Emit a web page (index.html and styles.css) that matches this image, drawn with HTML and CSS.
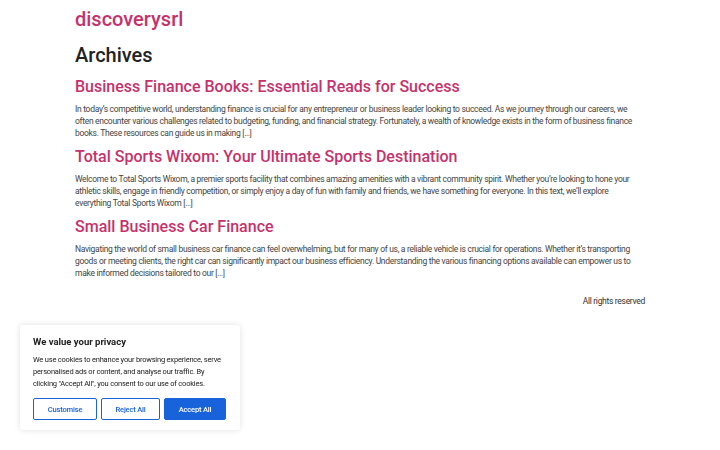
FILE: index.html
```html
<!DOCTYPE html>
<html lang="en">
<head>
<meta charset="utf-8">
<title>Archives - discoverysrl</title>
<link rel="stylesheet" href="styles.css">
</head>
<body>
<div class="page">
  <header class="site-header">
    <a class="site-title" href="#">discoverysrl</a>
  </header>
  <main class="archive">
    <h1 class="archive-title">Archives</h1>
    <article class="post">
      <h2 class="post-title"><a href="#">Business Finance Books: Essential Reads for Success</a></h2>
      <p class="post-excerpt">In today’s competitive world, understanding finance is crucial for any entrepreneur or business leader looking to succeed. As we journey through our careers, we often encounter various challenges related to budgeting, funding, and financial strategy. Fortunately, a wealth of knowledge exists in the form of business finance books. These resources can guide us in making […]</p>
    </article>
    <article class="post">
      <h2 class="post-title"><a href="#">Total Sports Wixom: Your Ultimate Sports Destination</a></h2>
      <p class="post-excerpt">Welcome to Total Sports Wixom, a premier sports facility that combines amazing amenities with a vibrant community spirit. Whether you’re looking to hone your athletic skills, engage in friendly competition, or simply enjoy a day of fun with family and friends, we have something for everyone. In this text, we’ll explore everything Total Sports Wixom […]</p>
    </article>
    <article class="post">
      <h2 class="post-title"><a href="#">Small Business Car Finance</a></h2>
      <p class="post-excerpt">Navigating the world of small business car finance can feel overwhelming, but for many of us, a reliable vehicle is crucial for operations. Whether it’s transporting goods or meeting clients, the right car can significantly impact our business efficiency. Understanding the various financing options available can empower us to make informed decisions tailored to our […]</p>
    </article>
  </main>
  <footer class="site-footer">
    <p>All rights reserved</p>
  </footer>
</div>
<div class="cookie-banner">
  <p class="cookie-title">We value your privacy</p>
  <p class="cookie-text">We use cookies to enhance your browsing experience, serve personalised ads or content, and analyse our traffic. By clicking "Accept All", you consent to our use of cookies.</p>
  <div class="cookie-actions">
    <button class="btn btn-outline">Customise</button>
    <button class="btn btn-outline">Reject All</button>
    <button class="btn btn-solid">Accept All</button>
  </div>
</div>
</body>
</html>
```
FILE: styles.css
```css
* { box-sizing: border-box; }
html, body { margin: 0; padding: 0; background: #fff; }
body {
  font-family: Roboto, "Liberation Sans", sans-serif;
  color: #333;
}
a { text-decoration: none; }
.page {
  width: 570px;
  margin: 0 auto;
  padding-top: 5px;
}
.site-title {
  display: block;
  font-size: 20px;
  font-weight: 500;
  line-height: 28px;
  color: #c7316b;
}
.archive-title {
  margin: 8px 0 7px;
  font-size: 20px;
  font-weight: 500;
  line-height: 28px;
  color: #222;
}
.post { margin-bottom: 7px; }
.post-title {
  margin: 0 0 5px;
  font-size: 16px;
  font-weight: 500;
  line-height: 22px;
}
.post-title a { color: #c7316b; }
.post-excerpt {
  margin: 0;
  font-size: 8.5px;
  letter-spacing: -0.3px;
  line-height: 12px;
  color: #444;
}
.site-footer p {
  margin: 16px 0 0;
  text-align: right;
  font-size: 8.5px;
  letter-spacing: -0.3px;
  line-height: 12px;
  color: #333;
}
.cookie-banner {
  position: fixed;
  left: 20px;
  top: 325px;
  width: 220px;
  padding: 10px 13px 10px;
  background: #fff;
  border-radius: 3px;
  box-shadow: 0 0 6px rgba(0,0,0,0.12);
}
.cookie-title {
  margin: 0 0 5px;
  font-size: 9.5px;
  font-weight: 700;
  line-height: 14px;
  color: #212121;
}
.cookie-text {
  margin: 0 0 8px;
  font-size: 7.5px;
  letter-spacing: -0.2px;
  line-height: 12px;
  color: #212121;
}
.cookie-actions {
  display: flex;
  gap: 4px;
}
.btn {
  height: 22px;
  padding: 0;
  font-family: Roboto, "Liberation Sans", sans-serif;
  font-size: 7.6px;
  letter-spacing: -0.2px;
  font-weight: 500;
  border-radius: 2px;
  border: 1.5px solid #1863dc;
}
.btn-outline { background: #fff; color: #1863dc; }
.btn-outline:first-child { width: 64px; }
.btn-outline:nth-child(2) { width: 59px; }
.btn-solid { width: 62px; background: #1863dc; color: #fff; }
```
